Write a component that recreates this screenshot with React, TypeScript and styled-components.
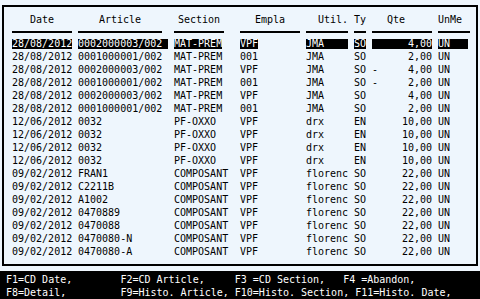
import styled, { createGlobalStyle } from "styled-components";

const GlobalStyle = createGlobalStyle`
  html, body {
    margin: 0;
    padding: 0;
    background: #eef6fd;
  }
  body {
    font-family: "DejaVu Sans Mono", "Liberation Mono", monospace;
    font-size: 10px;
    color: #000;
  }
`;

type Align = "left" | "center" | "right";

type Column = {
  key: string;
  title: string;
  align: Align;
  pad?: number;
  rule: number;
  field: number;
};

const COLUMNS: Column[] = [
  { key: "date", title: "Date", align: "center", rule: 60, field: 60 },
  { key: "article", title: "Article", align: "center", rule: 84, field: 90 },
  { key: "section", title: "Section", align: "center", rule: 50, field: 48 },
  { key: "empla", title: "Empla", align: "center", rule: 60, field: 18 },
  { key: "util", title: "Util.", align: "right", rule: 42, field: 42 },
  { key: "ty", title: "Ty", align: "left", rule: 12, field: 12 },
  { key: "qte", title: "Qte", align: "left", pad: 15, rule: 60, field: 60 },
  { key: "unme", title: "UnMe", align: "left", rule: 32, field: 30 },
];

const TRACKS = "66px 96px 66px 66px 48px 18px 66px 36px";

type Line = {
  date: string;
  article: string;
  section: string;
  empla: string;
  util: string;
  ty: string;
  sign: string;
  qte: string;
  unme: string;
};

const mat = (article: string, empla: string, sign: string, qte: string): Line => ({
  date: "28/08/2012",
  article,
  section: "MAT-PREM",
  empla,
  util: "JMA",
  ty: "SO",
  sign,
  qte,
  unme: "UN",
});

const pf = (): Line => ({
  date: "12/06/2012",
  article: "0032",
  section: "PF-OXXO",
  empla: "VPF",
  util: "drx",
  ty: "EN",
  sign: "",
  qte: "10,00",
  unme: "UN",
});

const comp = (article: string): Line => ({
  date: "09/02/2012",
  article,
  section: "COMPOSANT",
  empla: "VPF",
  util: "florenc",
  ty: "SO",
  sign: "",
  qte: "22,00",
  unme: "UN",
});

const LINES: Line[] = [
  mat("0002000003/002", "VPF", "", "4,00"),
  mat("0001000001/002", "001", "", "2,00"),
  mat("0002000003/002", "VPF", "-", "4,00"),
  mat("0001000001/002", "001", "-", "2,00"),
  mat("0002000003/002", "VPF", "", "4,00"),
  mat("0001000001/002", "001", "", "2,00"),
  pf(),
  pf(),
  pf(),
  pf(),
  comp("FRAN1"),
  comp("C2211B"),
  comp("A1002"),
  comp("0470889"),
  comp("0470088"),
  comp("0470080-N"),
  comp("0470080-A"),
];

const KEYS =
  "F1=CD Date,        F2=CD Article,     F3 =CD Section,   F4 =Abandon,\n" +
  "F8=Detail,         F9=Histo. Article, F10=Histo. Section, F11=Histo. Date,";

const Screen = styled.div`
  width: 480px;
  height: 299px;
  display: flex;
  flex-direction: column;
  overflow: hidden;
  background: #eef6fd;
`;

const Panel = styled.div`
  margin: 5px 2px 0;
  height: 261px;
  box-sizing: border-box;
  border: 2px solid #000;
  padding: 6px 0 0 8px;
`;

const GridRow = styled.div`
  display: grid;
  grid-template-columns: ${TRACKS};
  height: 13px;
`;

const HeadCell = styled.div<{ $w: number; $align: Align; $pad?: number }>`
  width: ${({ $w }) => $w}px;
  box-sizing: border-box;
  padding-left: ${({ $pad }) => $pad ?? 0}px;
  text-align: ${({ $align }) => $align};
  line-height: 13px;
  white-space: pre;
`;

const Rule = styled.div<{ $w: number }>`
  width: ${({ $w }) => $w}px;
  height: 2px;
  margin-top: 5px;
  background: #000;
`;

const Field = styled.div<{ $w: number; $on: boolean; $split?: boolean }>`
  width: ${({ $w }) => $w}px;
  height: 10px;
  line-height: 10px;
  display: flex;
  justify-content: ${({ $split }) => ($split ? "space-between" : "flex-start")};
  white-space: pre;
  background: ${({ $on }) => ($on ? "#000" : "transparent")};
  color: ${({ $on }) => ($on ? "#fff" : "#000")};
`;

const Keys = styled.div`
  margin-top: 5px;
  height: 28px;
  box-sizing: border-box;
  padding: 2px 0 0 6px;
  background: #000;
  color: #fff;
  line-height: 13px;
  white-space: pre;
`;

function LineRow({ line, selected }: { line: Line; selected: boolean }) {
  return (
    <GridRow>
      {COLUMNS.map((c) => {
        if (c.key === "qte") {
          return (
            <Field key={c.key} $w={c.field} $on={selected} $split>
              <span>{line.sign}</span>
              <span>{line.qte}</span>
            </Field>
          );
        }
        return (
          <Field key={c.key} $w={c.field} $on={selected}>
            {line[c.key as keyof Line]}
          </Field>
        );
      })}
    </GridRow>
  );
}

export default function App() {
  return (
    <Screen>
      <GlobalStyle />
      <Panel>
        <GridRow>
          {COLUMNS.map((c) => (
            <HeadCell key={c.key} $w={c.rule} $align={c.align} $pad={c.pad}>
              {c.title}
            </HeadCell>
          ))}
        </GridRow>
        <GridRow>
          {COLUMNS.map((c) => (
            <Rule key={c.key} $w={c.rule} />
          ))}
        </GridRow>
        {LINES.map((line, i) => (
          <LineRow key={i} line={line} selected={i === 0} />
        ))}
      </Panel>
      <Keys>{KEYS}</Keys>
    </Screen>
  );
}
